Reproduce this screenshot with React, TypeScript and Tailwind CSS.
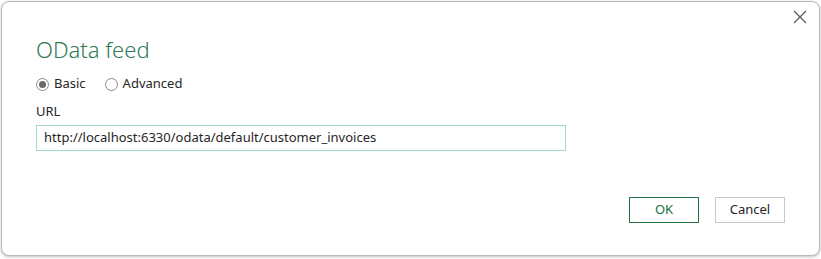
import React from 'react';

const Radio = ({ checked, label }: { checked?: boolean; label: string }) => (
  <label className="flex items-center gap-[5px]">
    <span className="w-[13px] h-[13px] rounded-full border border-[#8a8a8a] bg-white flex items-center justify-center">
      {checked && <span className="w-[7px] h-[7px] rounded-full bg-[#6b6b6b]" />}
    </span>
    <span>{label}</span>
  </label>
);

export default function App() {
  return (
    <div className="w-[821px] h-[259px] bg-white pl-px pt-px" style={{ fontFamily: '"Noto Sans", "Open Sans", sans-serif' }}>
      <div className="w-[819px] h-[255px] rounded-[8px] border border-[#b8b8b8] bg-white shadow-[0_1px_3px_rgba(0,0,0,0.25)] flex flex-col text-[13px] text-[#262626]">
        {/* barra superior con cierre */}
        <div className="flex justify-end pt-[7px] pr-[11px] h-[26px]">
          <svg width="16" height="16" viewBox="0 0 16 16" className="text-[#5a5a5a]">
            <path d="M2 2 L14 14 M14 2 L2 14" stroke="currentColor" strokeWidth="1.2" fill="none" />
          </svg>
        </div>

        <div className="pl-[34px] pr-[253px]">
          <h1 className="text-[22px] font-light leading-[30px] text-[#2f7a55] mt-[6px]">OData feed</h1>

          <div className="flex items-center gap-[19px] mt-[11px] h-[18px]">
            <Radio checked label="Basic" />
            <Radio label="Advanced" />
          </div>

          <div className="mt-[9px] leading-[18px]">URL</div>
          <div className="mt-[5px] h-[26px] border border-[#a3d9bd] flex items-center px-[7px]">
            http://localhost:6330/odata/default/customer_invoices
          </div>
        </div>

        <div className="flex justify-end gap-[16px] pr-[34px] mt-[46px]">
          <button className="w-[70px] h-[26px] border border-[#217346] text-[#217346] bg-white">OK</button>
          <button className="w-[70px] h-[26px] border border-[#c8c8c8] bg-white text-[#262626]">Cancel</button>
        </div>
      </div>
    </div>
  );
}
